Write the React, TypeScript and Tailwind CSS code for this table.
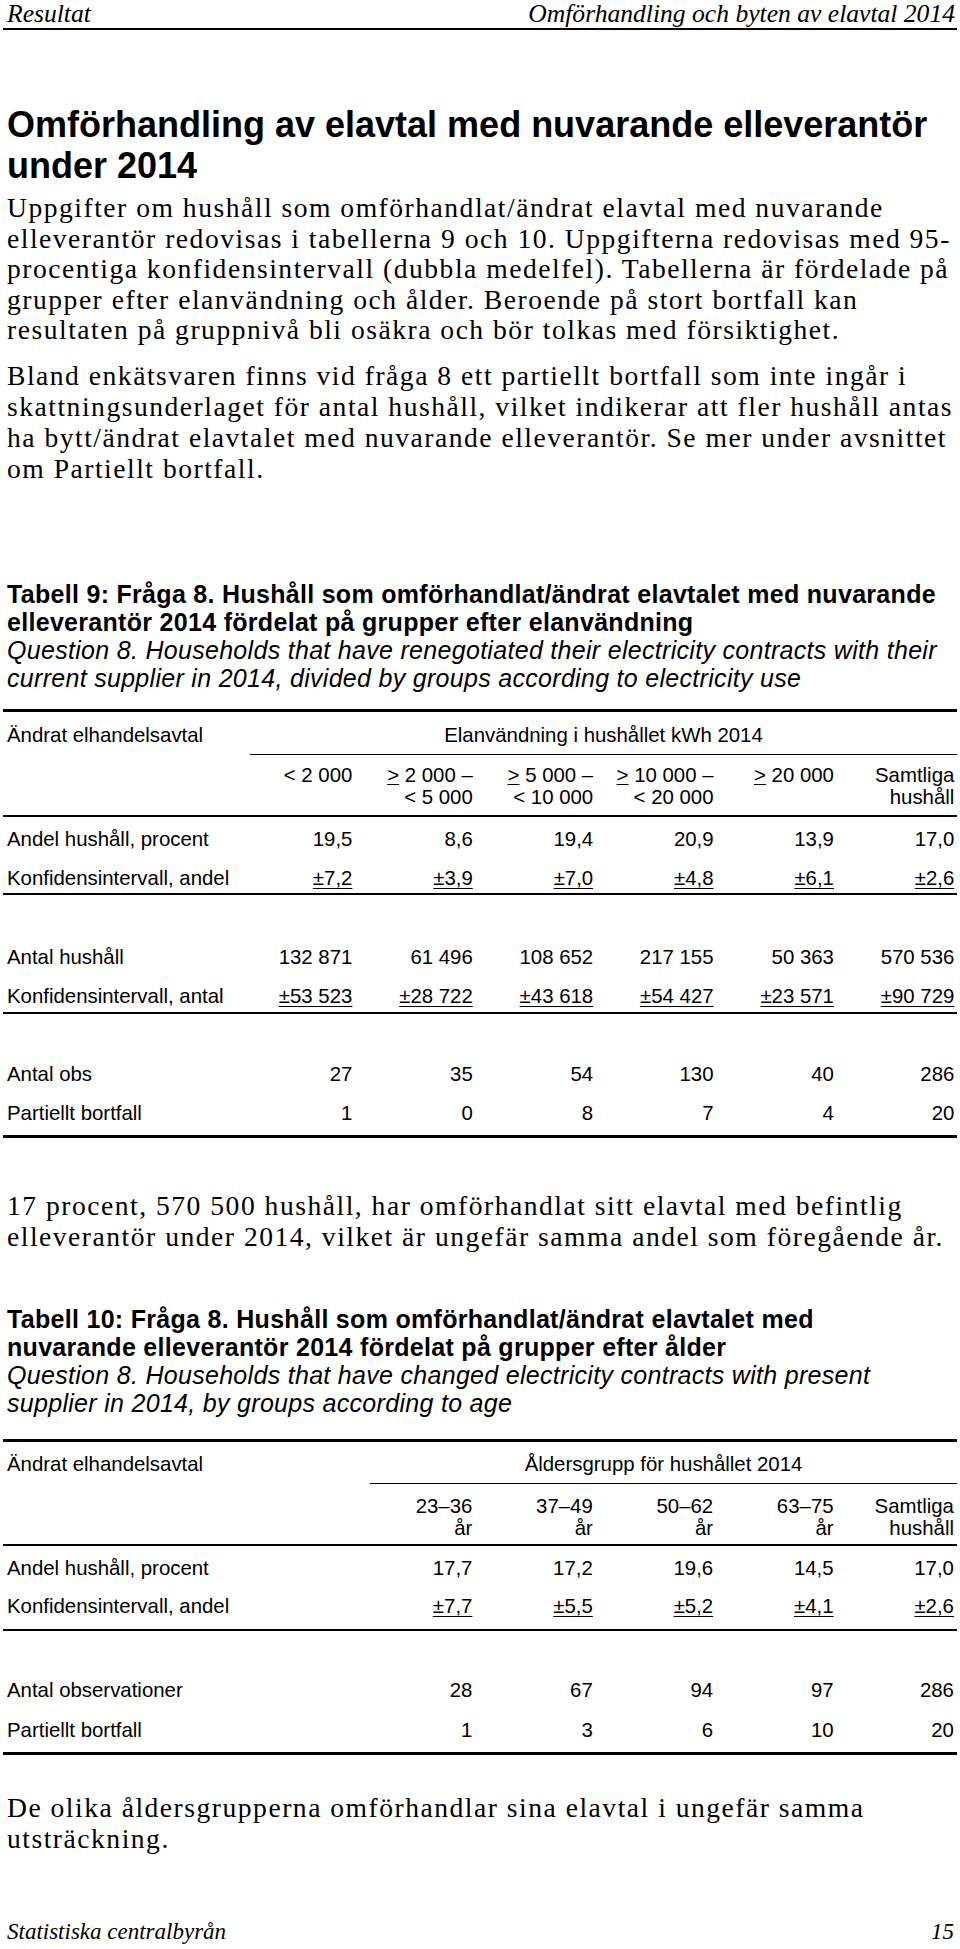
const serif = "font-['Liberation_Serif','Times_New_Roman',serif]";
const sans = "font-['Liberation_Sans',Arial,sans-serif]";

function Num({ v, u }: { v: string; u?: boolean }) {
  return (
    <div className="w-[120.4px] shrink-0 text-right whitespace-nowrap">
      <span className={u ? "underline decoration-1 underline-offset-[3px]" : ""}>{v}</span>
    </div>
  );
}

function DataRow({
  label,
  values,
  u,
  labelClass,
  className,
}: {
  label: string;
  values: string[];
  u?: boolean;
  labelClass: string;
  className: string;
}) {
  return (
    <div className={`flex leading-[24px] ${className}`}>
      <div className={`shrink-0 pl-[4px] whitespace-nowrap ${labelClass}`}>{label}</div>
      {values.map((v, i) => (
        <Num key={i} v={v} u={u} />
      ))}
    </div>
  );
}

function Ge() {
  return <span className="underline decoration-1 underline-offset-2">&gt;</span>;
}

function HeadCell({ lines }: { lines: React.ReactNode[] }) {
  return (
    <div className="w-[120.4px] shrink-0 text-right whitespace-nowrap leading-[22px]">
      {lines.map((l, i) => (
        <div key={i}>{l}</div>
      ))}
    </div>
  );
}

function Para({ lines, className }: { lines: string[]; className: string }) {
  return (
    <div className={`${serif} pl-[4px] text-[27.6px] tracking-[1.5px] whitespace-nowrap ${className}`}>
      {lines.map((l, i) => (
        <div key={i}>{l}</div>
      ))}
    </div>
  );
}

function Caption({ bold, italic, className }: { bold: string[]; italic: string[]; className: string }) {
  return (
    <div className={`${sans} pl-[4px] text-[25px] tracking-[0.3px] leading-[28px] whitespace-nowrap ${className}`}>
      {bold.map((l, i) => (
        <div key={"b" + i} className="font-bold">
          {l}
        </div>
      ))}
      {italic.map((l, i) => (
        <div key={"i" + i} className="italic">
          {l}
        </div>
      ))}
    </div>
  );
}

export default function App() {
  return (
    <div className="w-[960px] h-[1949px] overflow-hidden bg-white px-[3px] text-black">
      {/* running header */}
      <div className={`${serif} flex justify-between pl-[4px] pr-[2px] text-[25.6px] italic leading-[28px]`}>
        <span>Resultat</span>
        <span>Omförhandling och byten av elavtal 2014</span>
      </div>
      <div className="h-[2px] bg-black" />

      <h1 className={`${sans} mt-[74px] pl-[4px] text-[36px] font-bold leading-[41px] whitespace-nowrap`}>
        Omförhandling av elavtal med nuvarande elleverantör
        <br />
        under 2014
      </h1>

      <Para
        className="mt-[7px] leading-[30.6px]"
        lines={[
          "Uppgifter om hushåll som omförhandlat/ändrat elavtal med nuvarande",
          "elleverantör redovisas i tabellerna 9 och 10. Uppgifterna redovisas med 95-",
          "procentiga konfidensintervall (dubbla medelfel). Tabellerna är fördelade på",
          "grupper efter elanvändning och ålder. Beroende på stort bortfall kan",
          "resultaten på gruppnivå bli osäkra och bör tolkas med försiktighet.",
        ]}
      />
      <Para
        className="mt-[14px] leading-[31px]"
        lines={[
          "Bland enkätsvaren finns vid fråga 8 ett partiellt bortfall som inte ingår i",
          "skattningsunderlaget för antal hushåll, vilket indikerar att fler hushåll antas",
          "ha bytt/ändrat elavtalet med nuvarande elleverantör. Se mer under avsnittet",
          "om Partiellt bortfall.",
        ]}
      />

      <Caption
        className="mt-[96px]"
        bold={[
          "Tabell 9: Fråga 8. Hushåll som omförhandlat/ändrat elavtalet med nuvarande",
          "elleverantör 2014 fördelat på grupper efter elanvändning",
        ]}
        italic={[
          "Question 8. Households that have renegotiated their electricity contracts with their",
          "current supplier in 2014, divided by groups according to electricity use",
        ]}
      />

      {/* Tabell 9 */}
      <div className={`${sans} mt-[17px] text-[20.4px]`}>
        <div className="h-[3px] bg-black" />
        <div className="flex leading-[24px]">
          <div className="w-[247px] shrink-0 pl-[4px] pt-[11px]">Ändrat elhandelsavtal</div>
          <div className="flex-1 border-b border-black pt-[11px] pb-[7px] text-center">
            Elanvändning i hushållet kWh 2014
          </div>
        </div>
        <div className="flex border-b-2 border-black pt-[9px] pb-[7px]">
          <div className="w-[229px] shrink-0" />
          <HeadCell lines={["< 2 000"]} />
          <HeadCell lines={[<><Ge /> 2 000 –</>, "< 5 000"]} />
          <HeadCell lines={[<><Ge /> 5 000 –</>, "< 10 000"]} />
          <HeadCell lines={[<><Ge /> 10 000 –</>, "< 20 000"]} />
          <HeadCell lines={[<><Ge /> 20 000</>]} />
          <HeadCell lines={["Samtliga", "hushåll"]} />
        </div>
        <div className="border-b-2 border-black pb-[3px]">
          <DataRow
            className="pt-[10px]"
            labelClass="w-[229px]"
            label="Andel hushåll, procent"
            values={["19,5", "8,6", "19,4", "20,9", "13,9", "17,0"]}
          />
          <DataRow
            className="pt-[15px]"
            labelClass="w-[229px]"
            label="Konfidensintervall, andel"
            u
            values={["±7,2", "±3,9", "±7,0", "±4,8", "±6,1", "±2,6"]}
          />
        </div>
        <div className="border-b-2 border-black pb-[4px]">
          <DataRow
            className="pt-[50px]"
            labelClass="w-[229px]"
            label="Antal hushåll"
            values={["132 871", "61 496", "108 652", "217 155", "50 363", "570 536"]}
          />
          <DataRow
            className="pt-[15px]"
            labelClass="w-[229px]"
            label="Konfidensintervall, antal"
            u
            values={["±53 523", "±28 722", "±43 618", "±54 427", "±23 571", "±90 729"]}
          />
        </div>
        <div className="pb-[10px]">
          <DataRow
            className="pt-[48px]"
            labelClass="w-[229px]"
            label="Antal obs"
            values={["27", "35", "54", "130", "40", "286"]}
          />
          <DataRow
            className="pt-[15px]"
            labelClass="w-[229px]"
            label="Partiellt bortfall"
            values={["1", "0", "8", "7", "4", "20"]}
          />
        </div>
        <div className="h-[3px] bg-black" />
      </div>

      <Para
        className="mt-[52px] leading-[31px]"
        lines={[
          "17 procent, 570 500 hushåll, har omförhandlat sitt elavtal med befintlig",
          "elleverantör under 2014, vilket är ungefär samma andel som föregående år.",
        ]}
      />

      <Caption
        className="mt-[53px]"
        bold={[
          "Tabell 10: Fråga 8. Hushåll som omförhandlat/ändrat elavtalet med",
          "nuvarande elleverantör 2014 fördelat på grupper efter ålder",
        ]}
        italic={[
          "Question 8. Households that have changed electricity contracts with present",
          "supplier in 2014, by groups according to age",
        ]}
      />

      {/* Tabell 10 */}
      <div className={`${sans} mt-[22px] text-[20.4px]`}>
        <div className="h-[3px] bg-black" />
        <div className="flex leading-[24px]">
          <div className="w-[367px] shrink-0 pl-[4px] pt-[10px]">Ändrat elhandelsavtal</div>
          <div className="flex-1 border-b border-black pt-[10px] pb-[7px] text-center">
            Åldersgrupp för hushållet 2014
          </div>
        </div>
        <div className="flex border-b-2 border-black pt-[11px] pb-[5px]">
          <div className="w-[349px] shrink-0" />
          <HeadCell lines={["23–36", "år"]} />
          <HeadCell lines={["37–49", "år"]} />
          <HeadCell lines={["50–62", "år"]} />
          <HeadCell lines={["63–75", "år"]} />
          <HeadCell lines={["Samtliga", "hushåll"]} />
        </div>
        <div className="border-b-2 border-black pb-[11px]">
          <DataRow
            className="pt-[10px]"
            labelClass="w-[349px]"
            label="Andel hushåll, procent"
            values={["17,7", "17,2", "19,6", "14,5", "17,0"]}
          />
          <DataRow
            className="pt-[14px]"
            labelClass="w-[349px]"
            label="Konfidensintervall, andel"
            u
            values={["±7,7", "±5,5", "±5,2", "±4,1", "±2,6"]}
          />
        </div>
        <div className="pb-[10px]">
          <DataRow
            className="pt-[47px]"
            labelClass="w-[349px]"
            label="Antal observationer"
            values={["28", "67", "94", "97", "286"]}
          />
          <DataRow
            className="pt-[16px]"
            labelClass="w-[349px]"
            label="Partiellt bortfall"
            values={["1", "3", "6", "10", "20"]}
          />
        </div>
        <div className="h-[3px] bg-black" />
      </div>

      <Para
        className="mt-[37px] leading-[31px]"
        lines={["De olika åldersgrupperna omförhandlar sina elavtal i ungefär samma", "utsträckning."]}
      />

      {/* footer */}
      <div className={`${serif} mt-[66px] flex justify-between pl-[4px] pr-[3px] text-[23px] italic leading-[24px]`}>
        <span>Statistiska centralbyrån</span>
        <span>15</span>
      </div>
    </div>
  );
}
